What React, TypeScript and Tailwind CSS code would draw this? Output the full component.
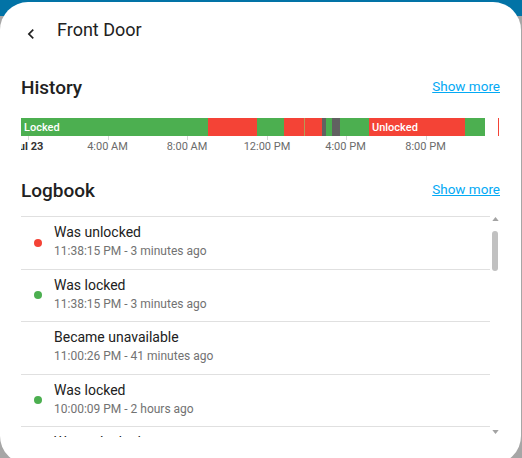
import React from 'react';

const GREEN = '#4caf50';
const RED = '#f44336';
const GRAY = '#616161';

// timeline segments, x in px from chart left (chart starts at page x=21)
const segments: { from: number; to: number; color: string; label?: string }[] = [
    { from: 0, to: 187, color: GREEN, label: 'Locked' },
    { from: 187, to: 236, color: RED },
    { from: 236, to: 263, color: GREEN },
    { from: 263, to: 283, color: RED },
    { from: 283, to: 284, color: '#b59a55' },
    { from: 284, to: 301, color: RED },
    { from: 301, to: 305, color: GRAY },
    { from: 305, to: 311, color: GREEN },
    { from: 311, to: 319, color: GRAY },
    { from: 319, to: 348, color: GREEN },
    { from: 348, to: 444, color: RED, label: 'Unlocked' },
    { from: 444, to: 464, color: GREEN },
    { from: 476.5, to: 477.5, color: RED },
];

const ticks = [
    { x: 7, label: 'Jul 23', bold: true },
    { x: 86.5, label: '4:00 AM' },
    { x: 166, label: '8:00 AM' },
    { x: 246, label: '12:00 PM' },
    { x: 324.5, label: '4:00 PM' },
    { x: 404.5, label: '8:00 PM' },
];

const entries = [
    { title: 'Was unlocked', time: '11:38:15 PM - 3 minutes ago', dot: RED },
    { title: 'Was locked', time: '11:38:15 PM - 3 minutes ago', dot: GREEN },
    { title: 'Became unavailable', time: '11:00:26 PM - 41 minutes ago' },
    { title: 'Was locked', time: '10:00:09 PM - 2 hours ago', dot: GREEN },
    { title: 'Was unlocked', time: '9:41:52 PM - 2 hours ago', dot: RED },
];

const ChevronLeft = () => (
    <svg viewBox="0 0 24 24" className="w-[20px] h-[20px]" fill="#212121">
        <path d="M15.41,16.58L10.83,12L15.41,7.41L14,6L8,12L14,18L15.41,16.58Z" />
    </svg>
);

function SectionHeader({ title }: { title: string }) {
    return (
        <div className="flex items-center justify-between h-[24px]">
            <h2 className="text-[19px] font-medium text-[#212121] leading-none">{title}</h2>
            <a className="text-[13.5px] text-[#03a9f4] underline leading-none cursor-pointer">Show more</a>
        </div>
    );
}

function Timeline() {
    return (
        <div className="relative h-[38px] overflow-hidden">
            <div className="relative h-[18px]">
                {segments.map((s, i) => (
                    <div
                        key={i}
                        className="absolute top-0 h-full flex items-center overflow-hidden"
                        style={{ left: s.from, width: s.to - s.from, background: s.color }}
                    >
                        {s.label && (
                            <span className="pl-[3px] text-[11px] font-medium text-white leading-none whitespace-nowrap">
                                {s.label}
                            </span>
                        )}
                    </div>
                ))}
            </div>
            {ticks.map((t, i) => (
                <React.Fragment key={i}>
                    <div className="absolute top-[18px] w-px h-[4px] bg-[#d6d6d6]" style={{ left: t.x }} />
                    <div
                        className={
                            'absolute top-[22px] -translate-x-1/2 text-[11px] leading-[14px] whitespace-nowrap ' +
                            (t.bold ? 'font-bold text-[#333333]' : 'text-[#6b6b6b]')
                        }
                        style={{ left: t.x }}
                    >
                        {t.label}
                    </div>
                </React.Fragment>
            ))}
        </div>
    );
}

function Scrollbar() {
    return (
        <div className="w-[10px] h-[224px] flex flex-col items-center">
            <svg viewBox="0 0 8 5" className="w-[7px] h-[4px] mt-[1px]" fill="#a3a3a3">
                <path d="M0 5L4 0L8 5Z" />
            </svg>
            <div className="mt-[10px] w-[6px] h-[40px] rounded-[3px] bg-[#c1c1c1]" />
            <div className="flex-1" />
            <svg viewBox="0 0 8 5" className="w-[7px] h-[4px] mb-[6px]" fill="#a3a3a3">
                <path d="M0 0L8 0L4 5Z" />
            </svg>
        </div>
    );
}

export default function App() {
    return (
        <div
            className="w-[522px] h-[458px] overflow-hidden bg-[linear-gradient(to_bottom,#0273a6_0px,#0273a6_16px,#a6a6a6_16px)]"
            style={{ fontFamily: 'Roboto, "Noto Sans", sans-serif' }}
        >
            <div className="mt-[2px] w-[521px] h-[462px] rounded-[28px] bg-white">
                <header className="flex items-center h-[56px]">
                    <button className="ml-[21px] mt-[7px] w-[20px] h-[20px] flex items-center justify-center">
                        <ChevronLeft />
                    </button>
                    <h1 className="ml-[16px] text-[18px] text-[#212121] leading-none">Front Door</h1>
                </header>

                <div className="px-[21px]">
                    <div className="mt-[17px]">
                        <SectionHeader title="History" />
                    </div>
                    <div className="mt-[19px]">
                        <Timeline />
                    </div>

                    <div className="mt-[22px]">
                        <SectionHeader title="Logbook" />
                    </div>

                    <div className="mt-[14px] flex items-start">
                        <div className="flex-1 h-[221px] overflow-hidden border-t border-[#e0e0e0]">
                            {entries.map((e, i) => (
                                <div key={i} className="h-[52.5px] flex items-stretch border-b border-[#e0e0e0]">
                                    <div className="w-[33px] pl-[13px] flex items-center">
                                        {e.dot && (
                                            <span className="w-[8px] h-[8px] rounded-full" style={{ background: e.dot }} />
                                        )}
                                    </div>
                                    <div className="flex flex-col pt-[5px]">
                                        <span className="text-[14px] leading-[20px] text-[#212121]">{e.title}</span>
                                        <span className="mt-[1px] text-[12px] leading-[16px] text-[#727272]">{e.time}</span>
                                    </div>
                                </div>
                            ))}
                        </div>
                        <Scrollbar />
                    </div>
                </div>
            </div>
        </div>
    );
}
